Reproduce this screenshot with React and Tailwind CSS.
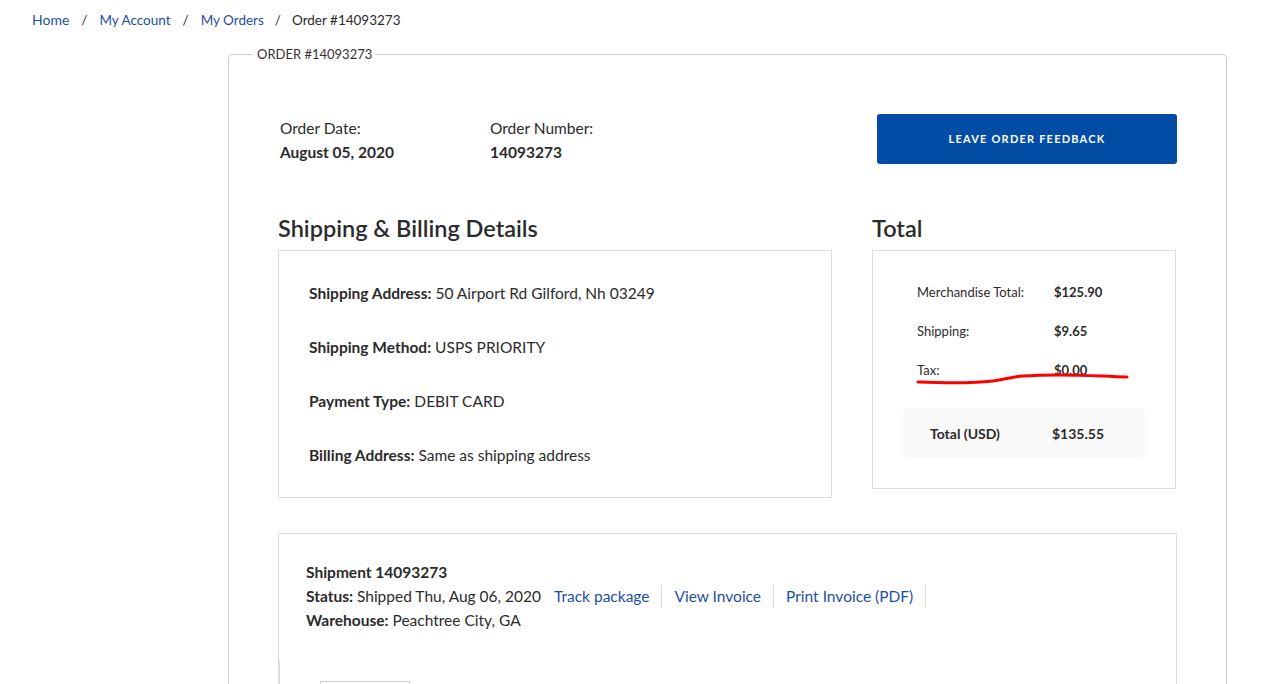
export default function App() {
  const font = { fontFamily: 'Lato, "Open Sans", sans-serif' };
  return (
    <div className="min-h-[684px] bg-white text-[#2b2b2b]" style={font}>
      <div className="flex items-center h-[40px] pl-[32px] text-[13.5px] leading-[20px]">
        <a className="text-[#1d4f9e] text-[14px]">Home</a>
        <span className="px-[12px]">/</span>
        <a className="text-[#1d4f9e]">My Account</a>
        <span className="px-[12px]">/</span>
        <a className="text-[#1d4f9e]">My Orders</a>
        <span className="px-[11px]">/</span>
        <span>Order #14093273</span>
      </div>
      <fieldset className="mt-[4px] ml-[228px] w-[999px] border border-[#c5d3d5] rounded-[4px] p-0 pl-[49px] pr-[49px] pb-[40px]">
        <legend className="ml-[-25px] px-[4px] text-[13px] leading-[20px] text-[#333]">ORDER #14093273</legend>
        <div className="flex items-start mt-[50px]">
          <div className="w-[212px] pl-[2px] mt-[2px] text-[15.5px] leading-[24px]">
            <div>Order Date:</div>
            <div className="font-bold">August 05, 2020</div>
          </div>
          <div className="mt-[2px] text-[15.5px] leading-[24px]">
            <div>Order Number:</div>
            <div className="font-bold">14093273</div>
          </div>
          <button className="ml-auto w-[300px] h-[50px] rounded-[3px] bg-[#024ca6] text-white text-[11px] font-bold tracking-[0.11em]">
            LEAVE ORDER FEEDBACK
          </button>
        </div>
        <div className="flex gap-[40px] mt-[50px]">
          <div className="w-[554px]">
            <h2 className="text-[23.5px] leading-[28px] font-semibold mb-[8px]">Shipping &amp; Billing Details</h2>
            <div className="border border-[#d5dde0] p-[30px] flex flex-col gap-[30px] text-[15.5px] leading-[24px]">
              <div><span className="font-bold">Shipping Address:</span> 50 Airport Rd Gilford, Nh 03249</div>
              <div><span className="font-bold">Shipping Method:</span> USPS PRIORITY</div>
              <div><span className="font-bold">Payment Type:</span> DEBIT CARD</div>
              <div><span className="font-bold">Billing Address:</span> Same as shipping address</div>
            </div>
          </div>
          <div className="w-[304px]">
            <h2 className="text-[23.5px] leading-[28px] font-semibold mb-[8px]">Total</h2>
            <div className="relative border border-[#d5dde0] h-[239px] px-[30px] pt-[31px]">
              <div className="pl-[14px] flex flex-col gap-[19px] text-[13px] leading-[20px]">
                <div className="flex"><span className="w-[137px]">Merchandise Total:</span><span className="font-bold">$125.90</span></div>
                <div className="flex"><span className="w-[137px]">Shipping:</span><span className="font-bold">$9.65</span></div>
                <div className="flex"><span className="w-[137px]">Tax:</span><span className="font-bold">$0.00</span></div>
              </div>
              <div className="mt-[28px] h-[50px] rounded-[4px] bg-[#f9f9f9] flex items-center pl-[27px] text-[14px] font-bold">
                <span className="w-[122px]">Total (USD)</span>
                <span>$135.55</span>
              </div>
              <svg className="absolute left-0 top-0 pointer-events-none" width="304" height="239" viewBox="0 0 304 239">
                <path d="M45 131 C 70 132, 95 133, 120 130 C 135 128, 138 126, 150 125 C 190 122, 220 125, 254 126" fill="none" stroke="#ff0000" strokeWidth="3" strokeLinecap="round" />
              </svg>
            </div>
          </div>
        </div>
        <div className="relative mt-[35px] border border-[#d5dde0] h-[200px] pl-[27px] pt-[26px] text-[15.5px] leading-[24px]">
          <div className="font-bold">Shipment 14093273</div>
          <div className="flex items-center">
            <span><span className="font-bold">Status:</span> Shipped Thu, Aug 06, 2020</span>
            <a className="ml-[1px] px-[12px] border-r border-[#dddddd] text-[#1d4f9e]">Track package</a>
            <a className="px-[12px] border-r border-[#dddddd] text-[#1d4f9e]">View Invoice</a>
            <a className="px-[12px] border-r border-[#dddddd] text-[#1d4f9e]">Print Invoice (PDF)</a>
          </div>
          <div><span className="font-bold">Warehouse:</span> Peachtree City, GA</div>
          <div className="absolute left-[-1px] top-[126px] w-[2px] h-[60px] bg-[#dcdcdc]"></div>
          <div className="ml-[14px] mt-[49px] w-[90px] h-[20px] border border-[#c5d3d5]"></div>
        </div>
      </fieldset>
    </div>
  );
}
